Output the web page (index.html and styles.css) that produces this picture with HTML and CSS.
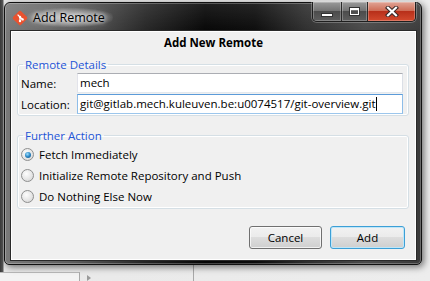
FILE: index.html
```html
<!DOCTYPE html>
<html lang="en">
<head>
    <meta charset="UTF-8">
    <title>Add Remote</title>
    <link rel="stylesheet" href="styles.css">
</head>
<body>
    <div class="window">
        <div class="title-bar">
            <svg class="app-icon" width="16" height="16" viewBox="0 0 16 16">
                <rect x="2.4" y="2.4" width="11.2" height="11.2" rx="1.6" transform="rotate(45 8 8)" fill="#e8522f"/>
                <path d="M5.6 4.6 L8 7 L8 11 M8 7 L10.6 9.4" stroke="#fff" stroke-width="1.3" fill="none"/>
                <circle cx="8" cy="7" r="1.2" fill="#fff"/>
                <circle cx="8" cy="11" r="1.2" fill="#fff"/>
                <circle cx="10.6" cy="9.4" r="1.2" fill="#fff"/>
            </svg>
            <span class="title">Add Remote</span>
            <div class="caption-buttons">
                <div class="caption-btn minimize"><span class="min-glyph"></span></div>
                <div class="caption-btn maximize"><span class="max-glyph"></span></div>
                <div class="caption-btn close">
                    <svg width="14" height="11" viewBox="0 0 14 11">
                        <path d="M3 1.8 L11 9.2 M11 1.8 L3 9.2" stroke="#3a2a28" stroke-width="4.2" stroke-linecap="square"/>
                        <path d="M3 1.8 L11 9.2 M11 1.8 L3 9.2" stroke="#fff" stroke-width="2.2" stroke-linecap="square"/>
                    </svg>
                </div>
            </div>
        </div>

        <div class="client">
            <div class="heading">Add New Remote</div>

            <fieldset class="group">
                <legend>Remote Details</legend>
                <div class="form-row">
                    <label class="form-label">Name:</label>
                    <div class="field">mech</div>
                </div>
                <div class="form-row">
                    <label class="form-label">Location:</label>
                    <div class="field focused">git@gitlab.mech.kuleuven.be:u0074517/git-overview.git<span class="caret"></span></div>
                </div>
            </fieldset>

            <fieldset class="group actions">
                <legend>Further Action</legend>
                <div class="radio-row"><span class="radio checked"></span>Fetch Immediately</div>
                <div class="radio-row"><span class="radio"></span>Initialize Remote Repository and Push</div>
                <div class="radio-row"><span class="radio"></span>Do Nothing Else Now</div>
            </fieldset>

            <div class="button-row">
                <button class="btn">Cancel</button>
                <button class="btn default">Add</button>
            </div>
        </div>
    </div>

    <div class="desktop-strip">
        <div class="strip-cell first"></div>
        <div class="strip-arrow"></div>
        <div class="strip-cell second"></div>
    </div>
</body>
</html>
```

FILE: styles.css
```css
body {
    margin: 0;
    width: 430px;
    height: 281px;
    overflow: hidden;
    font-family: 'Open Sans', 'DejaVu Sans', sans-serif;
    font-size: 11.5px;
    color: #000;
    background: linear-gradient(90deg, #3a3a3a 0, #5a5a5a 3px, #e9e9e9 4px, #ededed 100%);
    display: flex;
    flex-direction: column;
}
.window {
    margin: 2px 0 0 4px;
    width: 418px;
    height: 263px;
    box-sizing: border-box;
    border: 1px solid #111;
    border-radius: 6px 6px 5px 5px;
    background:
        linear-gradient(to bottom, rgba(255, 255, 255, 0.10), rgba(255, 255, 255, 0) 30px),
        linear-gradient(90deg, #7a7a7a 0, #5c5c5c 70px, #262626 140px, #060606 200px, #0c0c0c 250px, #2e2e2e 300px, #4a4a4a 360px, #3a3a3a 100%);
    box-shadow: inset 0 0 0 1px rgba(255, 255, 255, 0.25), 2px 2px 7px rgba(0, 0, 0, 0.55);
    display: flex;
    flex-direction: column;
    position: relative;
    z-index: 1;
}
.title-bar {
    height: 28px;
    display: flex;
    align-items: flex-start;
}
.app-icon {
    margin: 7px 0 0 7px;
}
.title {
    margin: 5px 0 0 -1px;
    padding: 0 8px 0 6px;
    font-size: 12.5px;
    line-height: 19px;
    color: #000;
    border-radius: 10px;
    background: radial-gradient(ellipse at center, rgba(225, 225, 225, 0.75) 0, rgba(200, 200, 200, 0.35) 55%, rgba(200, 200, 200, 0) 75%);
    text-shadow: 0 0 4px #fff, 0 0 8px rgba(255, 255, 255, 0.8);
}
.caption-buttons {
    margin: -1px 5px 0 auto;
    display: flex;
    border: 1px solid #1e1e1e;
    border-top: none;
    border-radius: 0 0 5px 5px;
    overflow: hidden;
    box-shadow: 0 0 0 1px rgba(255, 255, 255, 0.25);
}
.caption-btn {
    height: 19px;
    display: flex;
    align-items: center;
    justify-content: center;
    box-shadow: inset 0 0 0 1px rgba(255, 255, 255, 0.25);
}
.minimize, .maximize {
    background: linear-gradient(#9a9a9a 0, #747474 45%, #4c4c4c 50%, #5e5e5e 100%);
}
.minimize {
    width: 28px;
    border-right: 1px solid #2a2a2a;
}
.maximize {
    width: 25px;
    border-right: 1px solid #2a2a2a;
}
.close {
    width: 47px;
    background: linear-gradient(#e0a596 0, #cf6e58 45%, #b8301a 50%, #d34a2e 100%);
}
.min-glyph {
    margin-top: 7px;
    width: 10px;
    height: 2px;
    background: #fff;
    border: 1px solid #333;
}
.max-glyph {
    width: 7px;
    height: 4px;
    border: 1px solid #fff;
    border-top-width: 2px;
    outline: 1px solid #333;
}
.client {
    margin: 0 5px 0 6px;
    height: 229px;
    box-sizing: border-box;
    border: 1px solid #fff;
    box-shadow: 0 0 0 1px #2a2a2a;
    background-color: #f0f0f0;
    display: flex;
    flex-direction: column;
}
.heading {
    padding: 3px 0 7px;
    line-height: 15px;
    text-align: center;
    font-weight: bold;
}
.group {
    margin: 0 6px 0 5px;
    padding: 1px 5px 1px 3px;
    border: 1px solid #d5dfe5;
    border-radius: 3px;
    box-shadow: inset 0 0 0 1px #fff;
    min-width: 0;
}
.group legend {
    margin-left: 2px;
    padding: 0 2px;
    line-height: 15px;
    color: #2354d6;
}
.form-row {
    display: flex;
    align-items: center;
}
.form-row + .form-row {
    margin-top: 1px;
}
.form-label {
    width: 56px;
    flex-shrink: 0;
}
.field {
    flex: 1;
    height: 20px;
    box-sizing: border-box;
    padding: 0 2px;
    line-height: 18px;
    background-color: #fff;
    border: 1px solid;
    border-color: #abadb3 #dbdfe6 #e3e9ef #e2e3ea;
    white-space: nowrap;
    overflow: hidden;
}
.field.focused {
    border-color: #5b9bd9 #8ebde8 #9cc6ec #8ebde8;
}
.caret {
    display: inline-block;
    width: 1px;
    height: 14px;
    background: #000;
    vertical-align: -3px;
}
.actions {
    margin-top: 12px;
}
.radio-row {
    height: 21px;
    display: flex;
    align-items: center;
}
.radio {
    width: 13px;
    height: 13px;
    box-sizing: border-box;
    margin: 0 5px 0 0;
    border: 1px solid #8e8f8f;
    border-radius: 50%;
    background: radial-gradient(circle at 40% 35%, #fdfdfd 0, #e6e6e6 55%, #cfcfcf 100%);
    display: flex;
    align-items: center;
    justify-content: center;
}
.radio.checked::after {
    content: '';
    width: 6px;
    height: 6px;
    border-radius: 50%;
    background: radial-gradient(circle at 40% 35%, #9fe0ff 0, #2a86c4 50%, #134d7e 100%);
}
.button-row {
    margin: 17px 10px 0 0;
    display: flex;
    justify-content: flex-end;
    gap: 8px;
}
.btn {
    height: 23px;
    width: 73px;
    padding: 0;
    font-family: inherit;
    font-size: 11.5px;
    color: #000;
    border: 1px solid #707070;
    border-radius: 3px;
    background: linear-gradient(#f2f2f2 0, #ebebeb 48%, #dddddd 50%, #cfcfcf 100%);
    box-shadow: inset 0 0 0 1px rgba(255, 255, 255, 0.7);
}
.btn.default {
    width: 75px;
    border-color: #3c9fd6;
    box-shadow: inset 0 0 0 1px #bfe6f8;
}
.desktop-strip {
    flex: 1;
    display: flex;
    align-items: stretch;
}
.strip-cell.first {
    width: 79px;
    margin-top: 7px;
    border-top: 1px solid #b9b9b9;
    border-right: 1px solid #a8a8a8;
    background: #f3f3f3;
}
.strip-arrow {
    width: 0;
    height: 0;
    margin: 10px 0 0 7px;
    border-left: 4px solid #9a9a9a;
    border-top: 3px solid transparent;
    border-bottom: 3px solid transparent;
}
.strip-cell.second {
    width: 102px;
    border-right: 1px solid #a8a8a8;
}
```
